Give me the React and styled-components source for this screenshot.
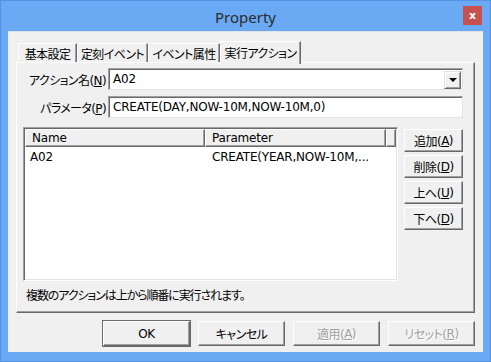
import React from "react";
import styled, { createGlobalStyle } from "styled-components";

const GlobalStyle = createGlobalStyle`
  html, body {
    margin: 0;
    padding: 0;
    background: #6aa9f4;
  }
  * {
    box-sizing: border-box;
  }
`;

const font = `"DejaVu Sans", "Noto Sans CJK JP", sans-serif`;

const Window = styled.div`
  width: 491px;
  height: 362px;
  background: #6aa9f4;
  border: 1px solid #5393e2;
  display: flex;
  flex-direction: column;
  font-family: ${font};
  font-size: 12px;
  font-feature-settings: "palt";
  color: #000;
`;

const TitleBar = styled.div`
  position: relative;
  height: 30px;
  display: flex;
  align-items: center;
  justify-content: center;
  .title {
    font-family: "Noto Sans", sans-serif;
    font-size: 15px;
    color: #2b2b2b;
    margin-top: 1px;
  }
`;

const CloseButton = styled.div`
  position: absolute;
  right: 8px;
  top: 5px;
  width: 19px;
  height: 19px;
  background: #c75050;
  color: #fff;
  font-family: "DejaVu Sans", sans-serif;
  font-weight: bold;
  font-size: 11px;
  display: flex;
  align-items: center;
  justify-content: center;
  line-height: 1;
`;

const Client = styled.div`
  flex: 1;
  margin: 0 7px 9px 7px;
  background: #f0f0f0;
  border-top: 1px solid #e3e3e3;
  padding: 8px 8px 0 8px;
  display: flex;
  flex-direction: column;
`;

const TabStrip = styled.div`
  display: flex;
  align-items: flex-end;
  height: 22px;
  padding-left: 2px;
  position: relative;
  z-index: 2;
`;

const Tab = styled.div`
  height: ${(p) => (p.$active ? "23px" : "19px")};
  margin-bottom: ${(p) => (p.$active ? "-2px" : "0")};
  padding: ${(p) => (p.$active ? "0 0 2px 0" : "0")};
  width: ${(p) => p.$w}px;
  background: #f0f0f0;
  border-top: 1px solid #fff;
  border-left: 1px solid #fff;
  border-right: 1px solid #696969;
  box-shadow: inset -1px 0 0 #a0a0a0;
  display: flex;
  align-items: center;
  justify-content: center;
  font-size: 12px;
  letter-spacing: -0.6px;
  white-space: nowrap;
`;

const Panel = styled.div`
  height: 251px;
  border-top: 1px solid #fff;
  border-left: 1px solid #fff;
  border-right: 1px solid #696969;
  border-bottom: 1px solid #696969;
  box-shadow: inset -1px -1px 0 #a0a0a0;
  padding: 5px 11px 0 6px;
  display: flex;
  flex-direction: column;
`;

const FormGrid = styled.div`
  display: grid;
  grid-template-columns: 83px 1fr;
  column-gap: 2px;
  row-gap: 6px;
  align-items: center;
`;

const Label = styled.label`
  text-align: right;
  white-space: nowrap;
  font-size: 12px;
  letter-spacing: -0.6px;
`;

const Field = styled.div`
  height: 22px;
  background: #fff;
  border-top: 1px solid #a0a0a0;
  border-left: 1px solid #a0a0a0;
  border-right: 1px solid #e3e3e3;
  border-bottom: 1px solid #e3e3e3;
  box-shadow: inset 1px 1px 0 #696969;
  display: flex;
  align-items: center;
  padding: 0 1px 0 4px;
  font-size: 12px;
  letter-spacing: -0.2px;
  white-space: nowrap;
  overflow: hidden;
  .value {
    flex: 1;
  }
`;

const DropButton = styled.div`
  width: 17px;
  height: 18px;
  margin-top: 1px;
  background: #f0f0f0;
  border-top: 1px solid #e3e3e3;
  border-left: 1px solid #e3e3e3;
  border-right: 1px solid #696969;
  border-bottom: 1px solid #696969;
  box-shadow: inset 1px 1px 0 #fff, inset -1px -1px 0 #a0a0a0;
  display: flex;
  align-items: center;
  justify-content: center;
  &::after {
    content: "";
    border-left: 4px solid transparent;
    border-right: 4px solid transparent;
    border-top: 4px solid #000;
  }
`;

const ListArea = styled.div`
  display: flex;
  gap: 6px;
  margin-top: 9px;
`;

const ListView = styled.div`
  width: 375px;
  height: 154px;
  background: #fff;
  border-top: 1px solid #a0a0a0;
  border-left: 1px solid #a0a0a0;
  border-right: 1px solid #fff;
  border-bottom: 1px solid #fff;
  box-shadow: inset 1px 1px 0 #696969, inset -1px -1px 0 #e3e3e3;
  padding: 1px;
`;

const HeaderRow = styled.div`
  display: flex;
  height: 18px;
`;

const HeaderCell = styled.div`
  width: ${(p) => p.$w}px;
  flex: ${(p) => (p.$w ? "none" : "1")};
  background: #f0f0f0;
  border-top: 1px solid #fff;
  border-left: 1px solid #fff;
  border-right: 1px solid #696969;
  border-bottom: 1px solid #696969;
  box-shadow: inset -1px -1px 0 #a0a0a0;
  padding-left: 6px;
  display: flex;
  align-items: center;
  font-size: 12px;
  letter-spacing: -0.2px;
`;

const Row = styled.div`
  display: flex;
  height: 17px;
  margin-top: 1px;
  align-items: center;
  font-size: 12px;
  letter-spacing: -0.2px;
  white-space: nowrap;
`;

const Cell = styled.div`
  width: ${(p) => p.$w}px;
  padding-left: ${(p) => p.$pl}px;
  overflow: hidden;
`;

const SideButtons = styled.div`
  display: flex;
  flex-direction: column;
  gap: 3px;
  padding-top: 2px;
`;

const Button = styled.button`
  width: ${(p) => p.$w || 59}px;
  height: ${(p) => p.$h || 23}px;
  padding: 0;
  background: #f0f0f0;
  font-family: ${font};
  font-feature-settings: "palt";
  font-size: 12px;
  letter-spacing: -0.5px;
  color: ${(p) => (p.disabled ? "#a0a0a0" : "#000")};
  text-shadow: ${(p) => (p.disabled ? "1px 1px 0 #fff" : "none")};
  border-top: 1px solid #fff;
  border-left: 1px solid #fff;
  border-right: 1px solid #696969;
  border-bottom: 1px solid #696969;
  box-shadow: ${(p) =>
    p.$default
      ? "0 0 0 1px #696969, inset -1px -1px 0 #a0a0a0"
      : "inset -1px -1px 0 #a0a0a0"};
  display: flex;
  align-items: center;
  justify-content: center;
  white-space: nowrap;
  u {
    text-decoration-thickness: 1px;
    text-underline-offset: 1px;
  }
`;

const Note = styled.div`
  margin-top: 7px;
  padding-left: 3px;
  font-size: 12px;
  line-height: 16px;
  letter-spacing: -1.1px;
`;

const Footer = styled.div`
  display: flex;
  justify-content: flex-end;
  gap: 8px;
  margin-top: 8px;
`;

const tabs = [
  { label: "基本設定", w: 59 },
  { label: "定刻イベント", w: 71 },
  { label: "イベント属性", w: 72 },
  { label: "実行アクション", w: 81, active: true },
];

const sideButtons = [
  { text: "追加", key: "A" },
  { text: "削除", key: "D" },
  { text: "上へ", key: "U" },
  { text: "下へ", key: "D" },
];

export default function App() {
  return (
    <>
      <GlobalStyle />
      <Window>
        <TitleBar>
          <span className="title">Property</span>
          <CloseButton>x</CloseButton>
        </TitleBar>
        <Client>
          <TabStrip>
            {tabs.map((t) => (
              <Tab key={t.label} $w={t.w} $active={t.active}>
                {t.label}
              </Tab>
            ))}
          </TabStrip>
          <Panel>
            <FormGrid>
              <Label>
                アクション名(<u>N</u>)
              </Label>
              <Field>
                <span className="value">A02</span>
                <DropButton />
              </Field>
              <Label>
                パラメータ(<u>P</u>)
              </Label>
              <Field>
                <span className="value">CREATE(DAY,NOW-10M,NOW-10M,0)</span>
              </Field>
            </FormGrid>
            <ListArea>
              <ListView>
                <HeaderRow>
                  <HeaderCell $w={180}>Name</HeaderCell>
                  <HeaderCell $w={181}>Parameter</HeaderCell>
                  <HeaderCell />
                </HeaderRow>
                <Row>
                  <Cell $w={180} $pl={5}>
                    A02
                  </Cell>
                  <Cell $w={181} $pl={7}>
                    CREATE(YEAR,NOW-10M,...
                  </Cell>
                </Row>
              </ListView>
              <SideButtons>
                {sideButtons.map((b, i) => (
                  <Button key={i}>
                    {b.text}(<u>{b.key}</u>)
                  </Button>
                ))}
              </SideButtons>
            </ListArea>
            <Note>複数のアクションは上から順番に実行されます。</Note>
          </Panel>
          <Footer>
            <Button $w={87} $h={25} $default>
              OK
            </Button>
            <Button $w={87} $h={25}>
              キャンセル
            </Button>
            <Button $w={87} $h={25} disabled>
              適用(<u>A</u>)
            </Button>
            <Button $w={87} $h={25} disabled>
              リセット(<u>R</u>)
            </Button>
          </Footer>
        </Client>
      </Window>
    </>
  );
}
